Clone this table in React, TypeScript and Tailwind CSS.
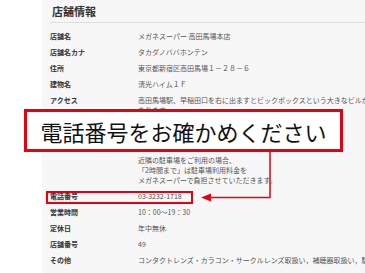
import React from "react";

const rowsTop: [string, string][] = [
  ["店舗名", "メガネスーパー 高田馬場本店"],
  ["店舗名カナ", "タカダノババホンテン"],
  ["住所", "東京都新宿区高田馬場１－２８－６"],
  ["建物名", "清光ハイム１Ｆ"],
];

const accessLines = [
  "高田馬場駅、早稲田口を右に出ますとビックボックスという大きなビルがあります。",
  "あります。",
  "次の信号を左に曲がり、早稲田通りをまっすぐ、お進みください。",
  "当店は、ビルの１階、コンビニエンスストアのお隣でございます。",
  "\u00a0",
  "\u00a0",
  "近隣の駐車場をご利用の場合、",
  "「2時間まで」は駐車場利用料金を",
  "メガネスーパーで負担させていただきます。",
];

const rowsBottom: [string, string][] = [
  ["電話番号", "03-3232-1718"],
  ["営業時間", "10：00～19：30"],
  ["定休日", "年中無休"],
  ["店舗番号", "49"],
  ["その他", "コンタクトレンズ・カラコン・サークルレンズ取扱い，補聴器取扱い，駐車場提携あり"],
];

function Row({ label, value }: { label: string; value: string }) {
  return (
    <div className="flex py-[3px] leading-[10px]">
      <div className="w-[88px] shrink-0 font-bold text-[#333]">{label}</div>
      <div className="whitespace-nowrap text-[#555]">{value}</div>
    </div>
  );
}

export default function App() {
  return (
    <div className="relative flex h-[273px] w-[365px] overflow-hidden bg-white font-['Noto_Sans_CJK_JP',sans-serif] text-[7px]">
      <div className="w-[42px] shrink-0 bg-white" />
      <div className="flex-1 bg-[#f7f7f7] pl-[8px]">
        <div className="flex h-[23px] items-center border-b border-[#dddddd] pl-[2px] text-[11px] font-bold text-[#333]">
          店舗情報
        </div>
        <div className="mt-[4.5px]">
          {rowsTop.map(([l, v]) => (
            <Row key={l} label={l} value={v} />
          ))}
          <div className="flex py-[3px] leading-[10.1px]">
            <div className="w-[88px] shrink-0 font-bold text-[#333]">アクセス</div>
            <div className="text-[#555]">
              {accessLines.map((t, i) => (
                <div key={i} className="whitespace-nowrap">
                  {t}
                </div>
              ))}
            </div>
          </div>
          {rowsBottom.map(([l, v]) => (
            <Row key={l} label={l} value={v} />
          ))}
        </div>
      </div>

      {/* callout box */}
      <div className="absolute left-[24px] top-[109px] flex h-[43px] w-[319px] items-center justify-center border-[3px] border-[#e60012] bg-white text-[22px] leading-none text-[#111]">
        電話番号をお確かめください
      </div>

      {/* highlight around phone row */}
      <div className="absolute left-[46px] top-[191px] h-[13px] w-[147px] border-2 border-[#e60012]" />

      {/* connector arrow */}
      <svg className="pointer-events-none absolute left-0 top-0" width="365" height="273">
        <path d="M270 152 V197.5 H209" fill="none" stroke="#e60012" strokeWidth="1.5" />
        <polygon points="201,197.5 211,193.5 211,201.5" fill="#e60012" />
      </svg>
    </div>
  );
}
